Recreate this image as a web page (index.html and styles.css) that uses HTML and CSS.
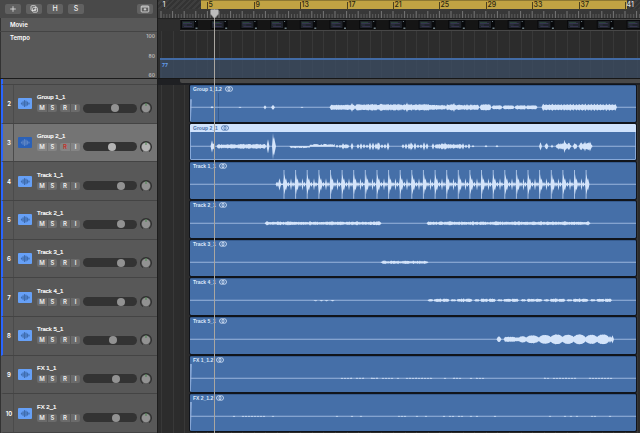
FILE: index.html
```html
<!DOCTYPE html>
<html lang="en">
<head>
<meta charset="utf-8">
<title>Arrangement</title>
<link rel="stylesheet" href="styles.css">
</head>
<body>
<main class="app">
  <section class="panel">
    <div class="panel-head">
      <div class="toolbar">
        <button class="tool" aria-label="Add track"><svg viewBox="0 0 16 10"><path d="M8 2.2v5.6M5.2 5h5.6"/></svg></button>
        <button class="tool" aria-label="Duplicate track"><svg viewBox="0 0 16 10"><rect x="5" y="1.7" width="4.8" height="4.8" rx="1"/><rect x="6.6" y="3.4" width="4.8" height="4.8" rx="1"/><path d="M9 4.6v2.4M7.8 5.8h2.4"/></svg></button>
        <button class="tool">H</button>
        <button class="tool">S</button>
        <button class="tool tool-end" aria-label="Track header options"><svg viewBox="0 0 16 10"><rect x="4.2" y="2" width="7.6" height="6" rx=".8"/><path d="M4.5 3h7M8 4v2.6M6.7 5.3h2.6"/></svg></button>
      </div>
      <div class="global movie-name">Movie</div>
      <div class="global tempo-name"><span>Tempo</span><div class="scale"><span>100</span><span>80</span><span>60</span></div></div>
      <div class="stub"></div>
    </div>
    <div class="rows" id="headers"></div>
  </section>
  <section class="arrange">
    <svg class="grid" id="grid"></svg>
    <div class="arrange-head">
      <div class="ruler"><div class="hatch"></div><div class="cycle"></div><div class="hatch hatch-end"></div><svg class="ruler-marks" id="ruler"></svg></div>
      <svg class="movie" id="movie"></svg>
      <div class="tempo"><div class="tempo-area">77</div></div>
      <div class="folder"><div class="folder-bar"></div></div>
    </div>
    <div class="rows lanes" id="lanes"></div>
    <div class="playhead"><svg viewBox="0 0 9 10"><path d="M.5 1.5Q.5.5 1.5.5h6q1 0 1 1V5L4.500 9.500.5 5z"/></svg></div>
  </section>
</main>
<script src="app.js"></script>
</body>
</html>
```
FILE: styles.css
```css
* { box-sizing: border-box; }
body { margin: 0; background: #2b2b2b; color: #eee; font: 500 6px/9px Inter, "Liberation Sans", sans-serif; }
button { border: 0; padding: 0; margin: 0; font: inherit; color: inherit; }
svg { display: block; }

.app { display: grid; grid-template-columns: 158px minmax(0, 1fr); min-height: 100vh; }
.panel, .arrange { display: flex; flex-direction: column; min-width: 0; }
.panel { background: #585858; border-right: 1px solid #1d1d1d; box-shadow: inset 1px 0 #333; }
.panel-head, .arrange-head { height: 85px; flex: none; display: flex; flex-direction: column; }
.rows { flex: 1; display: grid; grid-template-rows: repeat(9, minmax(38px, 1fr)); }

.toolbar { height: 18px; background: #494949; display: flex; gap: 5px; padding: 4px 4px 0 5px; }
.tool { width: 16px; height: 10px; border-radius: 2px; background: #616161; color: #f0f0f0; font-size: 7px; line-height: 10px; }
.tool svg { width: 16px; height: 10px; fill: none; stroke: #e4e4e4; stroke-width: .8; }
.tool-end { margin-left: auto; }
.global { padding-left: 10px; color: #fff; font-weight: 600; }
.movie-name { height: 14px; line-height: 13px; border-bottom: 1px solid #444; }
.tempo-name { height: 47px; padding-top: 1px; padding-right: 2px; display: flex; justify-content: space-between; border-bottom: 1px solid #1c1c1c; }
.scale { display: flex; flex-direction: column; justify-content: space-between; text-align: right; font-size: 5px; line-height: 6px; color: #bbb; }
.stub { flex: 1; border-left: 2px solid #2a66ff; border-bottom: 1px solid #454545; margin-left: 1px; }

.track { display: grid; grid-template-columns: 10px 14px 1fr; column-gap: 5px; align-items: center; margin-left: 1px; border-left: 2px solid transparent; border-bottom: 1px solid #444; background: linear-gradient(#4b4b4b, #4b4b4b) 10px 0 / 1px 100% no-repeat; }
.grouped { border-left-color: #2a66ff; }
.selected { background-color: #747474; }
.num { display: flex; justify-content: center; padding-left: 2px; color: #fff; font-weight: 600; }
.track-icon { width: 14px; height: 11px; border-radius: 1px; background: #66a0f7; }
.track-icon path { stroke: #3f6cae; stroke-width: 1.2; fill: none; stroke-linecap: round; }
.selected .track-icon { background: #2b61b8; }
.selected .track-icon path { stroke: #5c84c4; }
.name { color: #fff; font-family: "Liberation Sans", Arial, sans-serif; -webkit-text-stroke: .2px #fff; }
.controls { height: 12px; display: flex; align-items: center; }
.pair { display: flex; gap: 1px; margin-right: 3px; }
.key { width: 10px; height: 8px; background: #6b6b6b; font-size: 6px; line-height: 8px; font-weight: 600; }
.pair .key:first-child { border-radius: 2px 0 0 2px; }
.pair .key:last-child { border-radius: 0 2px 2px 0; width: 9px; }
.selected .key { background: #858585; }
.selected .armed { color: #c4322a; }
.fader { appearance: none; width: 54px; height: 9px; margin: 0 3px 0 0; border-radius: 5px; background: #333; }
.fader::-webkit-slider-thumb { appearance: none; width: 8px; height: 8px; border-radius: 50%; background: #929292; }
.selected .fader::-webkit-slider-thumb { background: #b4b4b4; }
.knob { width: 12px; height: 12px; flex: none; }
.knob .ring { fill: none; stroke: #303030; stroke-width: 1.2; }
.knob .cap { fill: #929292; }
.selected .cap { fill: #b4b4b4; }
.knob .mark { stroke: #4a854e; stroke-width: 1; }

.arrange { position: relative; overflow: hidden; isolation: isolate; background: #2c2c2c; }
.grid { position: absolute; inset: 0; width: 100%; height: 100%; z-index: -1; stroke: #383838; stroke-width: 1; }
.ruler { height: 19px; position: relative; display: flex; background: #383838; border-bottom: 1px solid #222; }
.hatch { width: 43px; height: 9px; background: repeating-linear-gradient(135deg, #333 0 2px, #3e3e3e 2px 4px); }
.hatch-end { width: 13px; }
.cycle { flex: 1; height: 9px; background: #c1a343; border-top: 1px solid #8f7932; }
.ruler-marks { position: absolute; inset: 0; width: 100%; height: 100%; font-size: 7px; font-weight: 500; }
.movie { width: 100%; height: 12px; background: #2d2d2d; }
.tempo { height: 48px; padding: 27px 0 0 2px; border-bottom: 1px solid #171717; }
.tempo-area { height: 20px; padding: 1px 0 0 2px; border-top: 2px solid #426ba5; background: #3c4c62cc; color: #66a0f0; font-size: 5px; font-weight: 700; line-height: 9px; }
.folder { flex: 1; padding-left: 22px; background: #1f2023; }
.folder-bar { height: 4px; background: #494949; border-radius: 0 0 0 2px; }
.lanes { padding: 0 4px 0 32px; }
.region { min-height: 0; display: flex; flex-direction: column; margin-bottom: 2px; border-radius: 1px; overflow: hidden; background: #456fa8; outline: 1px solid #10141b; box-shadow: inset 0 1px #365b8e; }
.region-title { height: 8px; flex: none; display: flex; align-items: center; gap: 3px; padding-left: 3px; font: 700 5px/8px "Liberation Sans", Arial, sans-serif; color: #dce8fa; white-space: nowrap; }
.region-title svg { width: 8px; height: 6px; fill: none; stroke: currentColor; stroke-width: .8; }
.region-selected { box-shadow: inset 0 0 0 1px #86a8d8; }
.region-selected .region-title { background: #cfe2fc; color: #456fa8; }
.wave { flex: 1; width: 100%; min-height: 0; }
.wave .body { fill: #d4e4fa; }
.wave .soft { fill: none; stroke: #a9c1e3; stroke-width: 1; }
.wave .axis { stroke: #9ab4dc; stroke-width: 1; }
.wave .fade { fill: #86a5d3; }
.wave .cut { stroke: #365b8e; stroke-width: 1; }

.playhead { position: absolute; top: 9px; bottom: 0; left: 52px; width: 9px; background: linear-gradient(#aaa6a0, #aaa6a0) 4px 0 / 1px 100% no-repeat; }
.playhead svg { width: 9px; height: 10px; fill: #bcbcbc; stroke: #8d8d8d; stroke-width: .5; }
```
FILE: app.js
```js
// Timeline x positions are measured from the window's left edge; regions start at 190.
const START = 190, SPAN = 446;
let seed = 7;
const rnd = () => (seed = (seed * 16807) % 2147483647) / 2147483647;

const blank = () => ({ up: new Array(SPAN * 2).fill(0), down: new Array(SPAN * 2).fill(0), extra: '' });
function put(w, x, up, down = up) {
  const i = Math.round((x - START) * 2);
  if (i < 0 || i >= SPAN * 2) return;
  w.up[i] = Math.max(w.up[i], up);
  w.down[i] = Math.max(w.down[i], down);
}
function noise(w, a, b, amp, vary = 0.5, bias = 1) {
  for (let x = a; x <= b; x += 0.5) {
    const edge = Math.min(1, (x - a + 0.5) / 1.5, (b - x + 0.5) / 1.5);
    const v = amp * edge * (1 - vary * rnd());
    put(w, x, v * bias, v);
  }
}
function hit(w, x, amp, half = 1) {
  for (let d = -half; d <= half; d += 0.5) put(w, x + d, amp * (1 - Math.abs(d) / (half + 0.5)));
}
function bead(w, x, half, amp) {
  for (let d = -half; d <= half; d += 0.5) put(w, x + d, amp * Math.sqrt(1 - (d / (half + 1)) ** 2) * (0.9 + 0.1 * rnd()));
}
function specks(w, a, b, amp, chance) {
  for (let x = a; x < b; x += 3) if (rnd() < chance) noise(w, x, x + 2, amp, 0.2, 1);
}

const waves = {
  group1(w) {
    hit(w, 212, 1); hit(w, 240, .6); hit(w, 265, 2); hit(w, 273, 2.5, 1.5); hit(w, 302, .6);
    noise(w, 330, 355, 2.7, .3); noise(w, 355, 432, 3.4, .4); noise(w, 430, 446, 2.4, .3); noise(w, 446, 479, 3, .4);
    hit(w, 352, 4.5); hit(w, 407, 5); hit(w, 454, 4.5);
    [[480, 491], [492, 502], [503, 514], [515, 526], [526, 537]].forEach(([a, b], i) => noise(w, a, b, i ? 2 : 3, .2));
    for (let x = 542; x < 615; x += 3) noise(w, x, x + 2.5, 3.6, .25);
    noise(w, 542, 616, 2.6, .2);
    w.extra = '<path class="fade" d="M0-8L2-8 .8 14H0z"/><path class="cut" d="M28.500-14V14"/>';
  },
  group2(w) {
    hit(w, 212, 6); hit(w, 213.5, 3); noise(w, 217, 266, 2.5, .5); hit(w, 268, 7, 1); hit(w, 273, 13, .5); hit(w, 274, 9, 1.5);
    for (let x = 290; x < 310; x += .5) put(w, x, .4, 1 + rnd() * .8);
    for (let x = 310; x < 335; x += .5) put(w, x, 1.2 + rnd() * 1.3, .4);
    for (let x = 337; x < 470; x += 3) if (rnd() < .8) hit(w, x, 1.5 + rnd() * 2.5, 1);
    noise(w, 341, 349, 2.2); noise(w, 435, 462, 2.6, .6); hit(w, 378, 4); hit(w, 388, 4); hit(w, 411, 4); hit(w, 424, 4);
    hit(w, 473, 1); hit(w, 486, 1); hit(w, 497, 1);
    hit(w, 540.5, 4); noise(w, 545, 548, 3.5, .3); noise(w, 551, 553, 2);
    noise(w, 556, 571, 3.5, .6); noise(w, 573, 577, 3.5); noise(w, 579, 592, 4, .6); hit(w, 564.5, 6.5); hit(w, 585, 5); hit(w, 590, 5);
  },
  drums(w) {
    hit(w, 277, 2.5); hit(w, 279.5, 6);
    let spikes = '';
    for (let i = 0; i < 27; i++) {
      const x = 284 + i * 11.62;
      spikes += `M${(x - START).toFixed(1)}-14V14`;
      hit(w, x + .5, 10, 1); hit(w, x + 2, 6, 1);
      if (i < 26) { hit(w, x + 4.5, 2.5, .5); hit(w, x + 7, 6, .5); hit(w, x + 9, 2.5, .5); }
    }
    noise(w, 277, 587, .8);
    w.extra = `<path class="soft" d="${spikes}"/>`;
  },
  pad(w) {
    noise(w, 265, 381, 1.8); noise(w, 427, 590, 1.8);
    [267, 288, 310, 332, 357, 379, 450, 473, 496, 519, 541, 565, 588].forEach(x => hit(w, x, 2.2, 1.5));
  },
  short(w) { noise(w, 381, 428, 1.8, .6); },
  pulse(w) {
    [314, 320, 325, 331].forEach(x => noise(w, x, x + 3, 1, .3, .3));
    for (let x = 428; x < 612; x += 23.2) {
      const s = Math.round(x * 2) / 2;
      noise(w, s, s + 5, 1.2, .3); noise(w, s + 6, s + 14, 1.8, .5); noise(w, s + 14, s + 21, 1.7, .3);
    }
  },
  beads(w) {
    noise(w, 497, 501, 2.8, .2); noise(w, 504, 516, 2.5, .2); noise(w, 515, 613, 2, .2);
    bead(w, 522.5, 3, 3.2); bead(w, 532.5, 6, 4);
    [545, 556.5, 568, 579.5, 591.5, 603].forEach((x, i) => bead(w, x, 5.5, i % 2 ? 5 : 4.6));
    hit(w, 610, 3.5, 1); hit(w, 612.5, 4, 1);
  },
  fx1(w) {
    specks(w, 332, 372, .7, .4); specks(w, 373, 432, .7, .8); specks(w, 444, 464, .7, .6);
    specks(w, 470, 491, .7, .4); specks(w, 544, 612, .7, .85);
    w.extra = '<path class="fade" d="M0-14L2-14 .8 14H0z"/>';
  },
  fx2(w) {
    specks(w, 230, 275, .6, .5); specks(w, 330, 370, .6, .2); specks(w, 398, 495, .6, .3); specks(w, 546, 612, .6, .4);
    w.extra = '<path class="fade" d="M0-14L2-14 .8 14H0z"/>';
  }
};

const tracks = [
  [2, 'Group 1_1', 'Group 1_1.2', 61, 'group1'],
  [3, 'Group 2_1', 'Group 2_1', 54, 'group2'],
  [4, 'Track 1_1', 'Track 1_1', 74, 'drums'],
  [5, 'Track 2_1', 'Track 2_1', 74, 'pad'],
  [6, 'Track 3_1', 'Track 3_1', 74, 'short'],
  [7, 'Track 4_1', 'Track 4_1', 74, 'pulse'],
  [8, 'Track 5_1', 'Track 5_1', 57, 'beads'],
  [9, 'FX 1_1', 'FX 1_1.2', 64, 'fx1'],
  [10, 'FX 2_1', 'FX 2_1.2', 64, 'fx2']
];

function waveSvg(kind) {
  const w = blank();
  waves[kind](w);
  let top = 'M0 0', bottom = '';
  for (let i = 0; i < SPAN * 2; i++) {
    top += `L${i / 2} ${(-w.up[i]).toFixed(1)}`;
    bottom = `L${i / 2} ${w.down[i].toFixed(1)}` + bottom;
  }
  return `<svg class="wave" viewBox="0 -14 ${SPAN} 28" preserveAspectRatio="none">${w.extra}<path class="axis" d="M0 0H${SPAN}"/><path class="body" d="${top}${bottom}z"/></svg>`;
}

document.getElementById('headers').innerHTML = tracks.map(([n, name, , vol]) => `
  <div class="track${n < 9 ? ' grouped' : ''}${n === 3 ? ' selected' : ''}">
    <span class="num">${n}</span>
    <svg class="track-icon" viewBox="0 0 14 11"><path d="M3.500 5v1M5 3.800v3.400M6.500 2.500v6M8 3.200v4.600M9.500 4v3M11 5v1"/></svg>
    <div>
      <div class="name">${name}</div>
      <div class="controls">
        <div class="pair"><button class="key">M</button><button class="key">S</button></div>
        <div class="pair"><button class="key armed">R</button><button class="key">I</button></div>
        <input class="fader" type="range" min="0" max="100" value="${vol}" aria-label="${name} volume">
        <svg class="knob" viewBox="0 0 12 12"><path class="ring" d="M3 10.500A5.400 5.400 0 1 1 9 10.500"/><circle class="cap" cx="6" cy="6" r="4.200"/><path class="mark" d="M6 1v3"/></svg>
      </div>
    </div>
  </div>`).join('');

document.getElementById('lanes').innerHTML = tracks.map(([n, , region, , kind]) => `
  <article class="region${n === 3 ? ' region-selected' : ''}">
    <div class="region-title">${region}<svg viewBox="0 0 8 6"><circle cx="2.800" cy="3" r="2.300"/><circle cx="5.200" cy="3" r="2.300"/></svg></div>
    ${waveSvg(kind)}
  </article>`).join('');

// Ruler: a long tick on each bar, short ticks on the beats, a label every four bars.
const ruler = document.getElementById('ruler');
const visible = ruler.getBoundingClientRect().width;
let marks = '', lines = '';
for (let beat = 0; 3 + beat * 2.9 < visible; beat++) {
  const x = 3 + beat * 2.9;
  const bar = beat % 4 === 0;
  marks += `<path d="M${x.toFixed(1)} ${bar ? 11 : 14}V18" stroke="${bar ? '#888' : '#666'}" stroke-width=".8"/>`;
  if (bar) lines += `M${Math.round(x) + .5} 0V2000`;
  if (beat % 16 === 0) {
    const n = beat / 4 + 1;
    const onCycle = n > 1 && n < 41;
    const px = Math.round(x) + .5;
    if (n > 1) marks += `<path d="M${px} 2V10" stroke="#4b411f"/>`;
    marks += `<text x="${px + 1}" y="7" fill="${onCycle ? '#2c2611' : '#ddd'}">${n}</text>`;
  }
}
ruler.innerHTML = marks;
document.getElementById('grid').innerHTML = `<path d="${lines}"/>`;

let frames = '<rect x="22" y="0" width="100%" height="12" fill="#484848"/><rect x="22" y="1" width="100%" height="10" fill="#151515"/>';
for (let x = 23; x < visible; x += 29.7) {
  frames += `<g transform="translate(${x.toFixed(1)} 1)"><path fill="#08090b" d="M0 0h17v9H0z"/><path fill="#20242b" d="M1 1h12v7H1z"/><path stroke="#35334f" d="M2 3.500h9M3 6.500h8"/><path stroke="#284337" d="M2 2.500h7"/><path stroke="#2c3544" d="M2 5h4"/><path fill="#6f8087" d="M14 1h1v1h-1zM14.500 7.500h2v1.500h-2z"/></g>`;
}
document.getElementById('movie').innerHTML = frames;
```
